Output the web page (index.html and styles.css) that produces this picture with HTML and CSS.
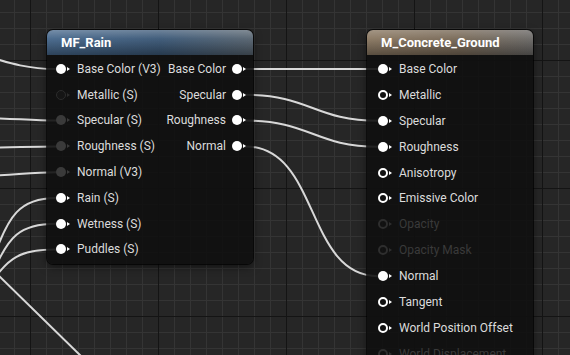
FILE: index.html
```html
<!DOCTYPE html>
<html lang="en">

<head>
  <meta charset="UTF-8" />
  <title>Material Graph</title>
  <link rel="stylesheet" href="styles.css">
</head>

<body>
  <div class="graph">
    <svg class="wires" width="570" height="355" viewBox="0 0 570 355">
      <g fill="none" stroke="#d8d8d8" stroke-width="2" stroke-linecap="round">
        <!-- into MF_Rain -->
        <path d="M -80 45 C -20 45, 0 69, 56 69" />
        <path d="M -20 118 C 10 118, 30 120.6, 56 120.6" />
        <path d="M -20 147.8 C 10 147.8, 30 146.4, 56 146.4" />
        <path d="M -20 176 C 10 175.6, 30 172.2, 56 172.2" />
        <path d="M -8 262 C 8 215, 20 198, 56 198" />
        <path d="M -8 275 C 8 236, 20 223.8, 56 223.8" />
        <path d="M -8 282 C 8 258, 20 249.6, 56 249.6" />
        <path d="M -4 273 L 84 359" />
        <!-- MF_Rain to M_Concrete_Ground -->
        <path d="M 245 69 L 378 69" />
        <path d="M 245 94.8 C 310 94.8, 315 120.8, 378 120.8" />
        <path d="M 245 120.6 C 310 120.6, 315 146.7, 378 146.7" />
        <path d="M 245 146.4 C 320 146.4, 305 276.2, 378 276.2" />
      </g>
    </svg>

    <div class="node node-fn">
      <div class="node-title">MF_Rain</div>
      <div class="node-body">
        <div class="pins">
          <div class="pin-row"><span class="pin"></span><span class="label">Base Color (V3)</span></div>
          <div class="pin-row"><span class="pin empty"></span><span class="label">Metallic (S)</span></div>
          <div class="pin-row"><span class="pin grey"></span><span class="label">Specular (S)</span></div>
          <div class="pin-row"><span class="pin grey"></span><span class="label">Roughness (S)</span></div>
          <div class="pin-row"><span class="pin grey"></span><span class="label">Normal (V3)</span></div>
          <div class="pin-row"><span class="pin"></span><span class="label">Rain (S)</span></div>
          <div class="pin-row"><span class="pin"></span><span class="label">Wetness (S)</span></div>
          <div class="pin-row"><span class="pin"></span><span class="label">Puddles (S)</span></div>
        </div>
        <div class="pins outputs">
          <div class="pin-row"><span class="label">Base Color</span><span class="pin"></span></div>
          <div class="pin-row"><span class="label">Specular</span><span class="pin"></span></div>
          <div class="pin-row"><span class="label">Roughness</span><span class="pin"></span></div>
          <div class="pin-row"><span class="label">Normal</span><span class="pin"></span></div>
        </div>
      </div>
    </div>

    <div class="node node-mat">
      <div class="node-title">M_Concrete_Ground</div>
      <div class="node-body">
        <div class="pins">
          <div class="pin-row"><span class="pin"></span><span class="label">Base Color</span></div>
          <div class="pin-row"><span class="pin ring"></span><span class="label">Metallic</span></div>
          <div class="pin-row"><span class="pin"></span><span class="label">Specular</span></div>
          <div class="pin-row"><span class="pin"></span><span class="label">Roughness</span></div>
          <div class="pin-row"><span class="pin ring"></span><span class="label">Anisotropy</span></div>
          <div class="pin-row"><span class="pin ring"></span><span class="label">Emissive Color</span></div>
          <div class="pin-row dim"><span class="pin ring"></span><span class="label">Opacity</span></div>
          <div class="pin-row dim"><span class="pin ring"></span><span class="label">Opacity Mask</span></div>
          <div class="pin-row"><span class="pin"></span><span class="label">Normal</span></div>
          <div class="pin-row"><span class="pin ring"></span><span class="label">Tangent</span></div>
          <div class="pin-row"><span class="pin ring"></span><span class="label">World Position Offset</span></div>
          <div class="pin-row dim"><span class="pin ring"></span><span class="label">World Displacement</span></div>
        </div>
      </div>
    </div>
  </div>
</body>

</html>
```

FILE: styles.css
```css
body {
  margin: 0;
  background: #262626;
  font-family: Roboto, "Liberation Sans", sans-serif;
}

.graph {
  position: relative;
  width: 570px;
  height: 355px;
  overflow: hidden;
  background-color: #262626;
  background-image:
    linear-gradient(to right, #141414 1px, transparent 1px),
    linear-gradient(to bottom, #141414 1px, transparent 1px),
    linear-gradient(to right, #343434 1px, transparent 1px),
    linear-gradient(to bottom, #343434 1px, transparent 1px);
  background-size: 128px 128px, 128px 128px, 16px 16px, 16px 16px;
  background-position: 30px 0, 0 60px, 14px 0, 0 12px;
}

.wires {
  position: absolute;
  left: 0;
  top: 0;
}

/* nodes sit on the canvas at their graph position */
.node {
  position: absolute;
  top: 30px;
  border-radius: 6px;
  background: rgba(15, 15, 15, 0.9);
  box-shadow: 0 0 0 1px rgba(0, 0, 0, 0.7), 0 3px 8px rgba(0, 0, 0, 0.5);
}

.node-fn {
  left: 47px;
  width: 206px;
  height: 234px;
}

.node-mat {
  left: 367px;
  width: 166px;
  height: 340px;
}

.node-title {
  height: 25px;
  line-height: 25px;
  padding-left: 14px;
  border-radius: 6px 6px 0 0;
  color: #fff;
  font-size: 13px;
  font-weight: bold;
}

.node-fn .node-title {
  background:
    linear-gradient(to bottom, rgba(255, 255, 255, 0.26), rgba(255, 255, 255, 0.04) 35%, rgba(0, 0, 0, 0.35)),
    linear-gradient(to right, #46678b, #3b5877 55%, #56636f);
}

.node-mat .node-title {
  background:
    linear-gradient(to bottom, rgba(255, 255, 255, 0.22), rgba(255, 255, 255, 0.04) 35%, rgba(0, 0, 0, 0.35)),
    linear-gradient(to right, #8a7862, #786957 55%, #6a6866);
}

.node-body {
  display: flex;
  justify-content: space-between;
  padding-top: 1px;
}

.pin-row {
  display: flex;
  align-items: center;
  height: 25.8px;
  color: #dcdcdc;
  font-size: 12px;
  white-space: nowrap;
}

.node-mat .pin-row {
  height: 25.9px;
}

.node-fn .pins {
  padding-left: 9px;
}

.node-mat .pins {
  padding-left: 11px;
}

.node-fn .pins.outputs {
  padding-left: 0;
  padding-right: 7px;
}

.outputs .pin-row {
  justify-content: flex-end;
}

.label {
  margin-left: 7px;
}

.outputs .label {
  margin-left: 0;
  margin-right: 6px;
}

.pin {
  display: flex;
  align-items: center;
  gap: 1px;
  flex: none;
  color: #fff;
}

.pin::before {
  content: "";
  box-sizing: border-box;
  width: 10px;
  height: 10px;
  border-radius: 50%;
  background: currentColor;
}

.pin::after {
  content: "";
  border-left: 3px solid currentColor;
  border-top: 2.5px solid transparent;
  border-bottom: 2.5px solid transparent;
}

.pin.ring::before {
  background: transparent;
  border: 2px solid currentColor;
}

.pin.empty {
  color: #2c2c2c;
}

.pin.empty::before {
  background: #151515;
  border: 1.5px solid #2c2c2c;
}

.pin.grey {
  color: #3a3a3a;
}

.dim {
  color: #3a3a3a;
}

.dim .pin {
  color: #2e2e2e;
}
```
